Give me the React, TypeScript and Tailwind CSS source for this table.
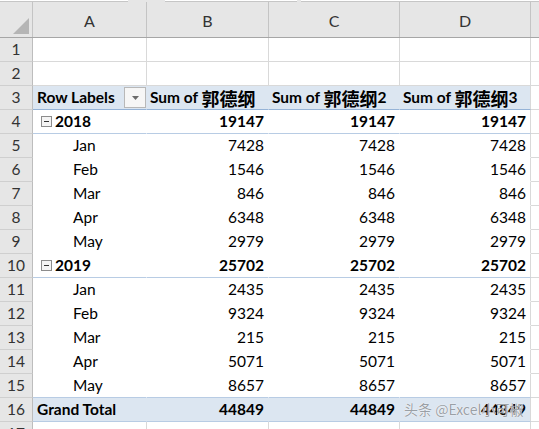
import React from "react";

const COLS = "grid grid-cols-[33px_114px_122px_131px_131px_1fr]";
const CJK = "font-['Noto_Sans_CJK_SC',sans-serif] text-[18px]";

type Kind = "blank" | "head" | "year" | "month" | "total";
type Row = { n: number; kind: Kind; label?: string; v?: number };

const rows: Row[] = [
  { n: 1, kind: "blank" },
  { n: 2, kind: "blank" },
  { n: 3, kind: "head" },
  { n: 4, kind: "year", label: "2018", v: 19147 },
  { n: 5, kind: "month", label: "Jan", v: 7428 },
  { n: 6, kind: "month", label: "Feb", v: 1546 },
  { n: 7, kind: "month", label: "Mar", v: 846 },
  { n: 8, kind: "month", label: "Apr", v: 6348 },
  { n: 9, kind: "month", label: "May", v: 2979 },
  { n: 10, kind: "year", label: "2019", v: 25702 },
  { n: 11, kind: "month", label: "Jan", v: 2435 },
  { n: 12, kind: "month", label: "Feb", v: 9324 },
  { n: 13, kind: "month", label: "Mar", v: 215 },
  { n: 14, kind: "month", label: "Apr", v: 5071 },
  { n: 15, kind: "month", label: "May", v: 8657 },
  { n: 16, kind: "total", label: "Grand Total", v: 44849 },
  { n: 17, kind: "blank" },
];

function bottomFor(r: Row): string {
  switch (r.kind) {
    case "blank":
      return "border-b-[#d9d9d9]";
    case "head":
      return "border-b-[#95b3d7]";
    case "year":
      return "border-b-[#b8cce4]";
    case "total":
      return "border-b-[#b8cce4]";
    default:
      return r.n === 15 ? "border-b-[#b8cce4]" : "border-b-white";
  }
}

function Minus() {
  return (
    <span className="w-[11px] h-[11px] border border-[#8c8c8c] bg-[#f4f4f4] flex items-center justify-center mr-[3px]">
      <span className="w-[5px] h-px bg-[#333]" />
    </span>
  );
}

function DropBtn() {
  return (
    <span className="w-[22px] h-[21px] border border-[#b8b8b8] bg-[#f6f6f6] flex items-center justify-center">
      <svg width="7" height="4" viewBox="0 0 7 4">
        <path d="M0 0h7L3.5 4z" fill="#6b6b6b" />
      </svg>
    </span>
  );
}

function SumHead({ suffix }: { suffix: string }) {
  return (
    <span className="font-bold whitespace-nowrap flex items-center">
      Sum of&nbsp;<span className={CJK + " font-bold"}>郭德纲</span>
      {suffix}
    </span>
  );
}

function RowView({ r }: { r: Row }) {
  const bb = bottomFor(r);
  const pivot = r.kind !== "blank";
  const bg = r.kind === "head" || r.kind === "total" ? "bg-[#dce6f1]" : "bg-white";
  const innerR = pivot ? "border-r-transparent" : "border-r-[#d9d9d9]";
  const cell = `box-border h-[24px] border-r border-b ${bb} ${bg} flex items-center overflow-hidden`;
  const num = (v?: number) => (
    <div className={`${cell} ${innerR} justify-end pr-[4px] ${r.kind !== "month" ? "font-bold" : ""}`}>
      {v !== undefined ? v : ""}
    </div>
  );

  let a: React.ReactNode = null;
  if (r.kind === "head") {
    a = (
      <div className={`${cell} ${innerR} justify-between pl-[4px] pr-0`}>
        <span className="font-bold whitespace-nowrap">Row Labels</span>
        <DropBtn />
      </div>
    );
  } else if (r.kind === "year") {
    a = (
      <div className={`${cell} ${innerR} pl-[8px]`}>
        <Minus />
        <span className="font-bold">{r.label}</span>
      </div>
    );
  } else if (r.kind === "month") {
    a = <div className={`${cell} ${innerR} pl-[40px]`}>{r.label}</div>;
  } else if (r.kind === "total") {
    a = (
      <div className={`${cell} ${innerR} pl-[4px]`}>
        <span className="font-bold whitespace-nowrap">{r.label}</span>
      </div>
    );
  } else {
    a = <div className={`${cell} ${innerR}`} />;
  }

  let b: React.ReactNode, c: React.ReactNode, d: React.ReactNode;
  if (r.kind === "head") {
    b = (
      <div className={`${cell} ${innerR} pl-[3px]`}>
        <SumHead suffix="" />
      </div>
    );
    c = (
      <div className={`${cell} ${innerR} pl-[3px]`}>
        <SumHead suffix="2" />
      </div>
    );
    d = (
      <div className={`${cell} border-r-[#d9d9d9] pl-[3px]`}>
        <SumHead suffix="3" />
      </div>
    );
  } else {
    b = num(r.v);
    c = num(r.v);
    d = (
      <div className={`${cell} border-r-[#d9d9d9] justify-end pr-[4px] ${r.kind !== "month" ? "font-bold" : ""}`}>
        {r.v !== undefined ? r.v : ""}
      </div>
    );
  }

  return (
    <div className={COLS}>
      <div className="box-border h-[24px] border-r border-b border-r-[#bdbdbd] border-b-[#cfcfcf] bg-[#e6e6e6] flex items-center justify-center text-[#333]">
        {r.n}
      </div>
      {a}
      {b}
      {c}
      {d}
      <div className="box-border h-[24px] border-b border-b-[#d9d9d9] bg-white" />
    </div>
  );
}

export default function App() {
  return (
    <div className="relative w-[539px] h-[429px] overflow-hidden bg-white text-[15.5px] leading-none text-black font-['Lato','Noto_Sans_CJK_SC',sans-serif]">
      {/* formula bar remnant */}
      <div className="flex h-[2px] bg-[#e6e6e6]">
        <div className="w-[128px] h-[2px] bg-white border-b border-[#c6c6c6]" />
        <div className="w-[37px]" />
        <div className="w-[132px] h-[2px] bg-white border-b border-[#c6c6c6]" />
        <div className="w-[4px]" />
        <div className="flex-1 h-[2px] bg-white border-b border-[#c6c6c6]" />
      </div>
      {/* column headers */}
      <div className={`${COLS} h-[36px] bg-[#e6e6e6] border-b border-[#a6a6a6] box-border text-[#333] text-[16px]`}>
        <div className="relative border-r border-[#c4c4c4]">
          <svg className="absolute left-[13px] top-[16px]" width="16" height="16" viewBox="0 0 16 16">
            <path d="M16 0V16H0z" fill="#b5b5b5" />
          </svg>
        </div>
        <div className="border-r border-[#c4c4c4] flex items-center justify-center pt-[2px]">A</div>
        <div className="border-r border-[#c4c4c4] flex items-center justify-center pt-[2px]">B</div>
        <div className="border-r border-[#c4c4c4] flex items-center justify-center pt-[2px]">C</div>
        <div className="border-r border-[#c4c4c4] flex items-center justify-center pt-[2px]">D</div>
        <div />
      </div>
      {rows.map((r) => (
        <RowView key={r.n} r={r} />
      ))}
      {/* watermark */}
      <div className="absolute left-[404px] top-[402px] text-[14px] whitespace-nowrap text-[#9aa0a6] font-['Noto_Sans_CJK_SC',sans-serif] [text-shadow:0_0_1px_#ffffff,0_0_1px_#ffffff]">
        头条 @Excel小可椒
      </div>
    </div>
  );
}
